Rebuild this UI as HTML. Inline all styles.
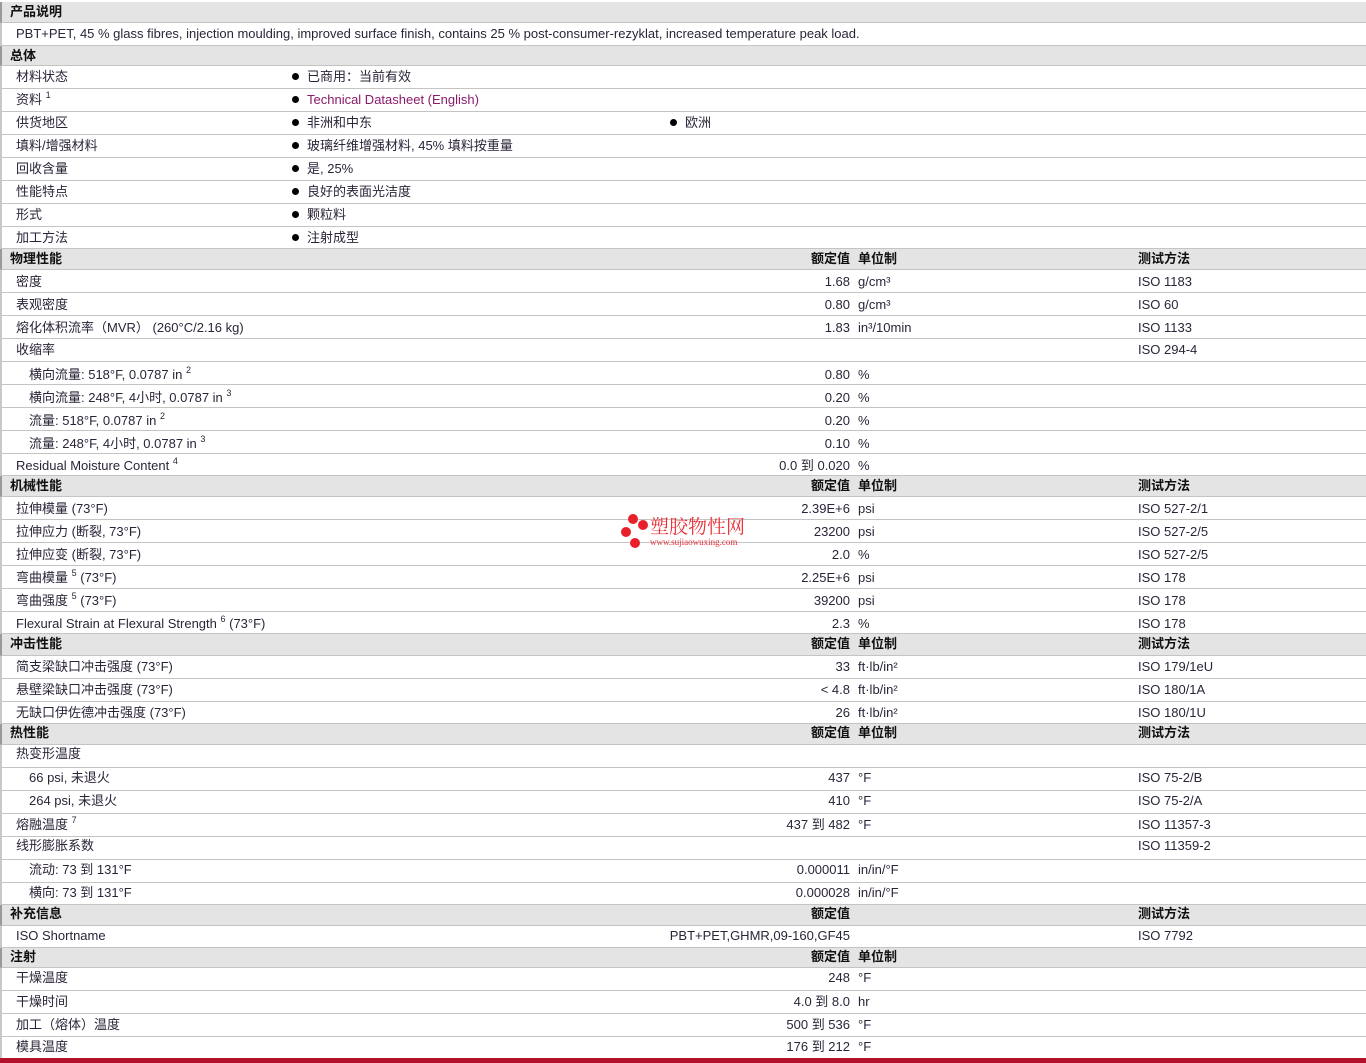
<!DOCTYPE html>
<html><head><meta charset="utf-8"><style>
*{margin:0;padding:0;box-sizing:border-box}
body{width:1366px;height:1063px;background:#fff;position:relative;overflow:hidden;font-family:"Liberation Sans","Noto Sans CJK SC",sans-serif;font-size:13px;color:#2b2438}
.r{position:absolute;left:0;width:1366px;border-bottom:1px solid #c4c4c4;border-left:2px solid #c8c8c8;background:#fff}
.h{background:#e4e4e4;border-left:2px solid #9a9a9a;border-bottom:1px solid #c4c4c4;font-weight:bold;color:#111}
.r span{position:absolute;top:0;white-space:nowrap}
.l{left:14px}.s{left:27px}.b{left:290px}.b2{left:668px}
.v{right:516px;text-align:right}.u{left:856px}.t{left:1136px}
.hl{left:8px}
.hv{right:516px}.hu{left:856px}
.d{display:inline-block;width:7px;height:7px;border-radius:50%;background:#000;margin-right:8px;vertical-align:1px}
sup{font-size:9px;vertical-align:6px;line-height:0}
a{color:#8b1a6b;text-decoration:none}
#wm{position:absolute;left:619px;top:512px;width:135px;height:38px}
#bar{position:absolute;left:0;top:1058px;width:1366px;height:5px;background:#b3132a}
</style></head><body>
<div class="r h" style="top:2px;height:21px;line-height:20px"><span class="hl">产品说明</span></div>
<div class="r" style="top:23px;height:23px;line-height:22px"><span class="l">PBT+PET, 45 % glass fibres, injection moulding, improved surface finish, contains 25 % post-consumer-rezyklat, increased temperature peak load.</span></div>
<div class="r h" style="top:46px;height:20px;line-height:19px"><span class="hl">总体</span></div>
<div class="r" style="top:66px;height:23px;line-height:22px"><span class="l">材料状态</span><span class="b"><i class="d"></i>已商用：当前有效</span></div>
<div class="r" style="top:89px;height:23px;line-height:22px"><span class="l">资料 <sup>1</sup></span><span class="b"><i class="d"></i><a>Technical Datasheet (English)</a></span></div>
<div class="r" style="top:112px;height:23px;line-height:22px"><span class="l">供货地区</span><span class="b"><i class="d"></i>非洲和中东</span><span class="b2"><i class="d"></i>欧洲</span></div>
<div class="r" style="top:135px;height:23px;line-height:22px"><span class="l">填料/增强材料</span><span class="b"><i class="d"></i>玻璃纤维增强材料, 45% 填料按重量</span></div>
<div class="r" style="top:158px;height:23px;line-height:22px"><span class="l">回收含量</span><span class="b"><i class="d"></i>是, 25%</span></div>
<div class="r" style="top:181px;height:23px;line-height:22px"><span class="l">性能特点</span><span class="b"><i class="d"></i>良好的表面光洁度</span></div>
<div class="r" style="top:204px;height:23px;line-height:22px"><span class="l">形式</span><span class="b"><i class="d"></i>颗粒料</span></div>
<div class="r" style="top:227px;height:22px;line-height:22px"><span class="l">加工方法</span><span class="b"><i class="d"></i>注射成型</span></div>

<div class="r h" style="top:249px;height:21px;line-height:19px"><span class="hl">物理性能</span><span class="hv">额定值</span><span class="hu">单位制</span><span class="t">测试方法</span></div>
<div class="r" style="top:270px;height:23px;line-height:23px"><span class="l">密度</span><span class="v">1.68</span><span class="u">g/cm³</span><span class="t">ISO 1183</span></div>
<div class="r" style="top:293px;height:23px;line-height:23px"><span class="l">表观密度</span><span class="v">0.80</span><span class="u">g/cm³</span><span class="t">ISO 60</span></div>
<div class="r" style="top:316px;height:23px;line-height:23px"><span class="l">熔化体积流率（MVR） (260°C/2.16 kg)</span><span class="v">1.83</span><span class="u">in³/10min</span><span class="t">ISO 1133</span></div>
<div class="r" style="top:339px;height:23px;line-height:21px"><span class="l">收缩率</span><span class="t">ISO 294-4</span></div>
<div class="r" style="top:362px;height:23px;line-height:25px"><span class="s">横向流量: 518°F, 0.0787 in <sup>2</sup></span><span class="v">0.80</span><span class="u">%</span></div>
<div class="r" style="top:385px;height:23px;line-height:25px"><span class="s">横向流量: 248°F, 4小时, 0.0787 in <sup>3</sup></span><span class="v">0.20</span><span class="u">%</span></div>
<div class="r" style="top:408px;height:23px;line-height:25px"><span class="s">流量: 518°F, 0.0787 in <sup>2</sup></span><span class="v">0.20</span><span class="u">%</span></div>
<div class="r" style="top:431px;height:23px;line-height:25px"><span class="s">流量: 248°F, 4小时, 0.0787 in <sup>3</sup></span><span class="v">0.10</span><span class="u">%</span></div>
<div class="r" style="top:454px;height:22px;line-height:24px"><span class="l">Residual Moisture Content <sup>4</sup></span><span class="v">0.0 到 0.020</span><span class="u">%</span></div>

<div class="r h" style="top:476px;height:21px;line-height:19px"><span class="hl">机械性能</span><span class="hv">额定值</span><span class="hu">单位制</span><span class="t">测试方法</span></div>
<div class="r" style="top:497px;height:23px;line-height:23px"><span class="l">拉伸模量 (73°F)</span><span class="v">2.39E+6</span><span class="u">psi</span><span class="t">ISO 527-2/1</span></div>
<div class="r" style="top:520px;height:23px;line-height:23px"><span class="l">拉伸应力 (断裂, 73°F)</span><span class="v">23200</span><span class="u">psi</span><span class="t">ISO 527-2/5</span></div>
<div class="r" style="top:543px;height:23px;line-height:23px"><span class="l">拉伸应变 (断裂, 73°F)</span><span class="v">2.0</span><span class="u">%</span><span class="t">ISO 527-2/5</span></div>
<div class="r" style="top:566px;height:23px;line-height:24px"><span class="l">弯曲模量 <sup>5</sup> (73°F)</span><span class="v">2.25E+6</span><span class="u">psi</span><span class="t">ISO 178</span></div>
<div class="r" style="top:589px;height:23px;line-height:24px"><span class="l">弯曲强度 <sup>5</sup> (73°F)</span><span class="v">39200</span><span class="u">psi</span><span class="t">ISO 178</span></div>
<div class="r" style="top:612px;height:22px;line-height:24px"><span class="l">Flexural Strain at Flexural Strength <sup>6</sup> (73°F)</span><span class="v">2.3</span><span class="u">%</span><span class="t">ISO 178</span></div>

<div class="r h" style="top:634px;height:22px;line-height:20px"><span class="hl">冲击性能</span><span class="hv">额定值</span><span class="hu">单位制</span><span class="t">测试方法</span></div>
<div class="r" style="top:656px;height:23px;line-height:21px"><span class="l">简支梁缺口冲击强度 (73°F)</span><span class="v">33</span><span class="u">ft·lb/in²</span><span class="t">ISO 179/1eU</span></div>
<div class="r" style="top:679px;height:23px;line-height:21px"><span class="l">悬壁梁缺口冲击强度 (73°F)</span><span class="v">&lt; 4.8</span><span class="u">ft·lb/in²</span><span class="t">ISO 180/1A</span></div>
<div class="r" style="top:702px;height:22px;line-height:21px"><span class="l">无缺口伊佐德冲击强度 (73°F)</span><span class="v">26</span><span class="u">ft·lb/in²</span><span class="t">ISO 180/1U</span></div>

<div class="r h" style="top:724px;height:21px;line-height:17px"><span class="hl">热性能</span><span class="hv">额定值</span><span class="hu">单位制</span><span class="t">测试方法</span></div>
<div class="r" style="top:745px;height:23px;line-height:18px"><span class="l">热变形温度</span></div>
<div class="r" style="top:768px;height:23px;line-height:20px"><span class="s">66 psi, 未退火</span><span class="v">437</span><span class="u">°F</span><span class="t">ISO 75-2/B</span></div>
<div class="r" style="top:791px;height:23px;line-height:20px"><span class="s">264 psi, 未退火</span><span class="v">410</span><span class="u">°F</span><span class="t">ISO 75-2/A</span></div>
<div class="r" style="top:814px;height:23px;line-height:22px"><span class="l">熔融温度 <sup>7</sup></span><span class="v">437 到 482</span><span class="u">°F</span><span class="t">ISO 11357-3</span></div>
<div class="r" style="top:837px;height:23px;line-height:18px"><span class="l">线形膨胀系数</span><span class="t">ISO 11359-2</span></div>
<div class="r" style="top:860px;height:23px;line-height:20px"><span class="s">流动: 73 到 131°F</span><span class="v">0.000011</span><span class="u">in/in/°F</span></div>
<div class="r" style="top:883px;height:22px;line-height:20px"><span class="s">横向: 73 到 131°F</span><span class="v">0.000028</span><span class="u">in/in/°F</span></div>

<div class="r h" style="top:905px;height:21px;line-height:17px"><span class="hl">补充信息</span><span class="hv">额定值</span><span class="t">测试方法</span></div>
<div class="r" style="top:926px;height:22px;line-height:20px"><span class="l">ISO Shortname</span><span class="v">PBT+PET,GHMR,09-160,GF45</span><span class="t">ISO 7792</span></div>

<div class="r h" style="top:948px;height:20px;line-height:17px"><span class="hl">注射</span><span class="hv">额定值</span><span class="hu">单位制</span></div>
<div class="r" style="top:968px;height:23px;line-height:20px"><span class="l">干燥温度</span><span class="v">248</span><span class="u">°F</span></div>
<div class="r" style="top:991px;height:23px;line-height:21px"><span class="l">干燥时间</span><span class="v">4.0 到 8.0</span><span class="u">hr</span></div>
<div class="r" style="top:1014px;height:23px;line-height:21px"><span class="l">加工（熔体）温度</span><span class="v">500 到 536</span><span class="u">°F</span></div>
<div class="r" style="top:1037px;height:21px;line-height:20px;border-bottom:none"><span class="l">模具温度</span><span class="v">176 到 212</span><span class="u">°F</span></div>
<div id="bar"></div>

<div id="wm">
<svg width="32" height="38" style="position:absolute;left:0;top:0">
<circle cx="14" cy="7" r="5" fill="#e8202a"/><circle cx="24" cy="13" r="5" fill="#e8202a"/>
<circle cx="7" cy="20" r="5" fill="#e8202a"/><circle cx="16" cy="31" r="5" fill="#e8202a"/>
</svg>
<div style="position:absolute;left:31px;top:4px;color:#e8303a;font-size:19px;line-height:20px;font-family:'Noto Serif CJK SC',serif">塑胶物性网</div>
<div style="position:absolute;left:31px;top:25px;color:#e8303a;font-size:9px;line-height:10px;font-family:'Liberation Serif',serif">www.sujiaowuxing.com</div>
</div>
</body></html>
